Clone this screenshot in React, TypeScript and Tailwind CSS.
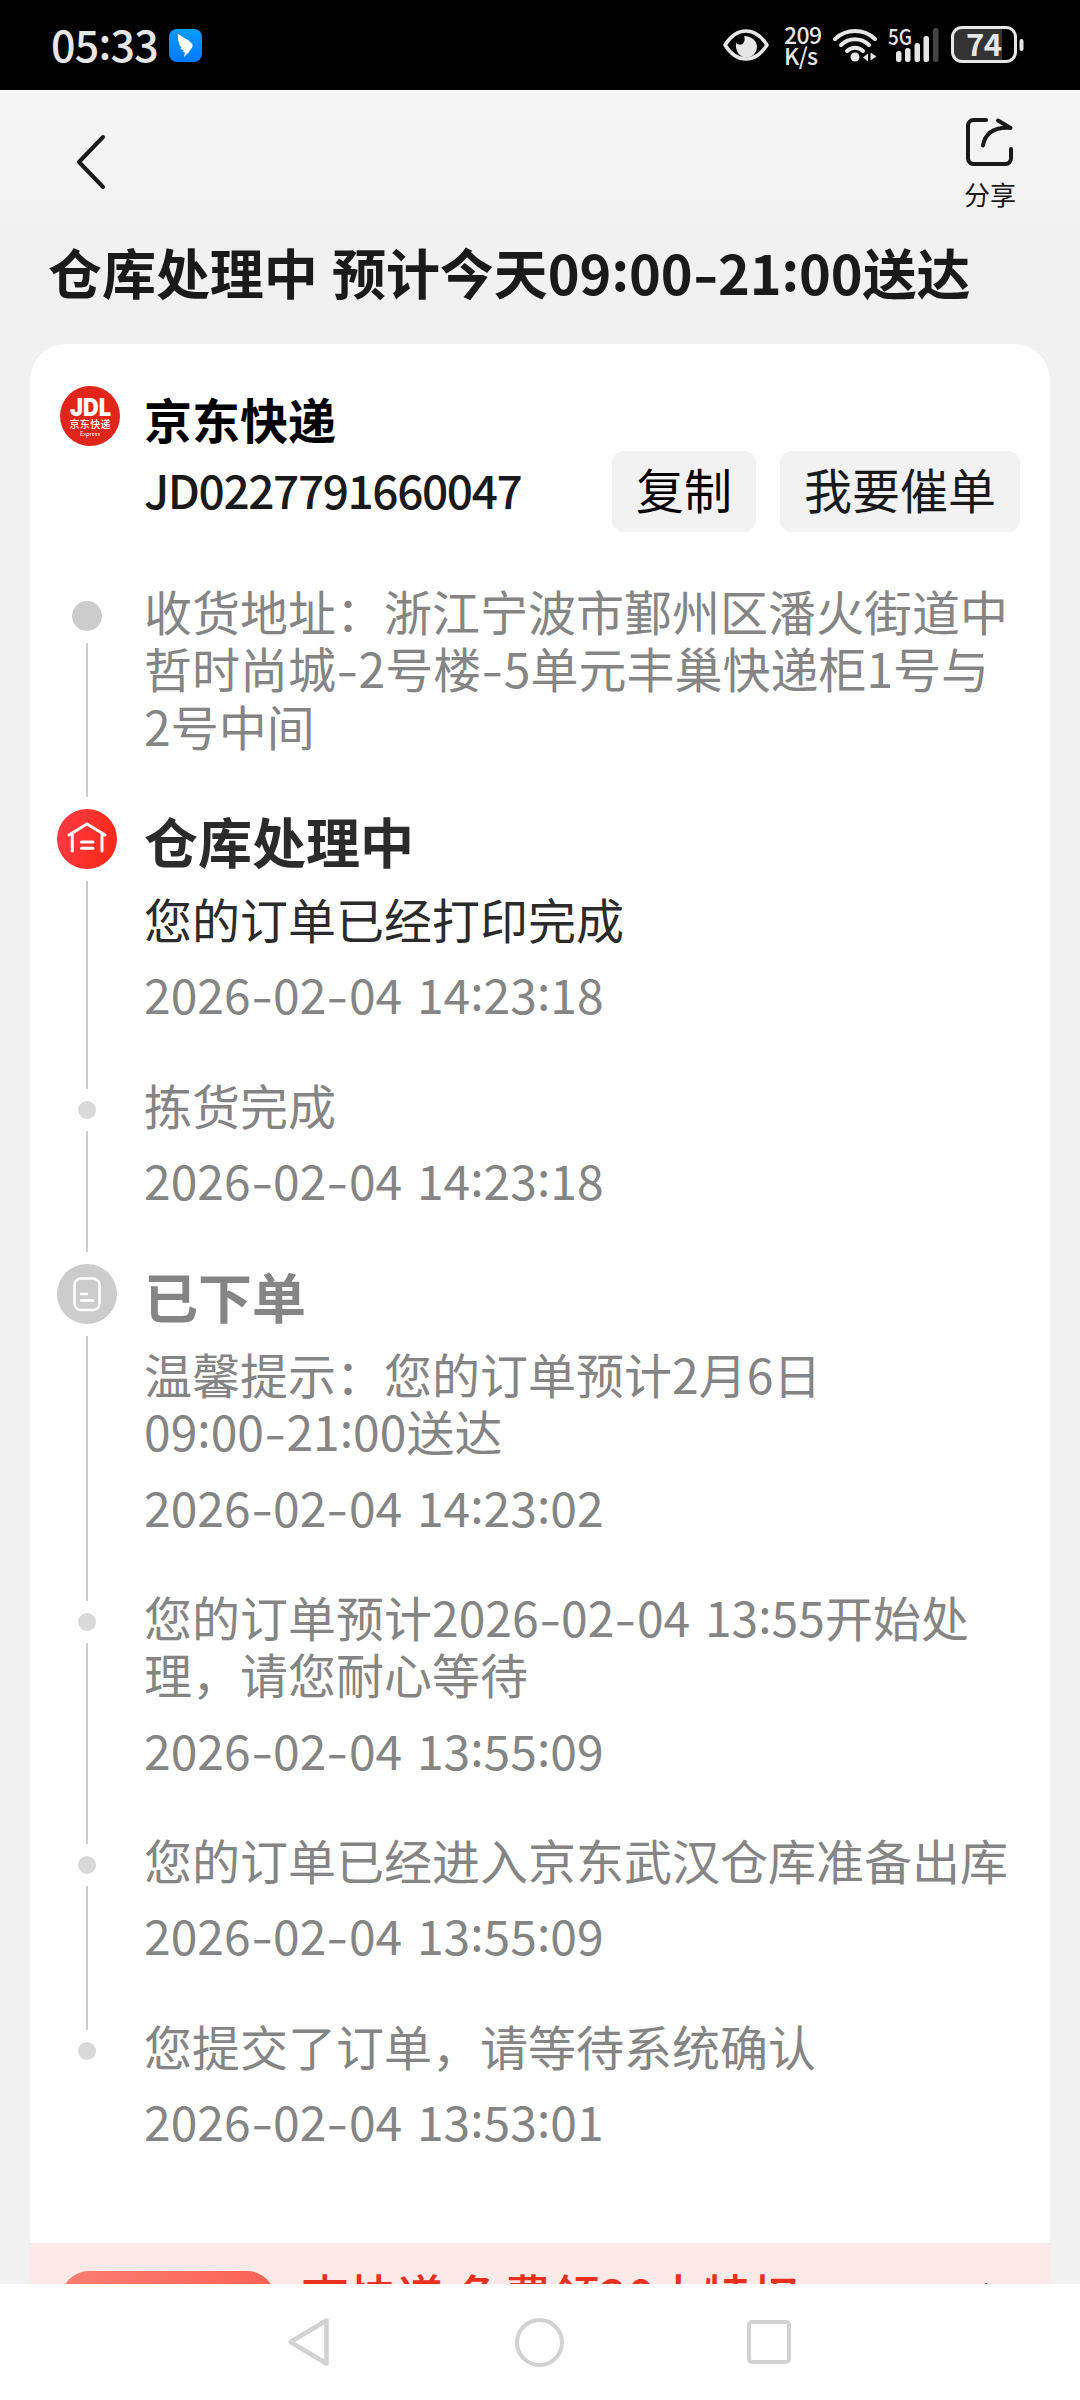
import React from 'react';
import { clsx } from 'clsx';

type Marker = 'dot' | 'bigDot' | 'warehouse' | 'order';

interface Step {
  marker: Marker;
  height: string;
  title?: string;
  lines: string[];
  time?: string;
  active?: boolean;
}

const steps: Step[] = [
  {
    marker: 'bigDot',
    height: 'h-[208px]',
    lines: ['收货地址：浙江宁波市鄞州区潘火街道中', '哲时尚城-2号楼-5单元丰巢快递柜1号与', '2号中间'],
  },
  {
    marker: 'warehouse',
    height: 'h-[292px]',
    title: '仓库处理中',
    lines: ['您的订单已经打印完成'],
    time: '2026-02-04 14:23:18',
    active: true,
  },
  { marker: 'dot', height: 'h-[163px]', lines: ['拣货完成'], time: '2026-02-04 14:23:18' },
  {
    marker: 'order',
    height: 'h-[349px]',
    title: '已下单',
    lines: ['温馨提示：您的订单预计2月6日', '09:00-21:00送达'],
    time: '2026-02-04 14:23:02',
  },
  {
    marker: 'dot',
    height: 'h-[243px]',
    lines: ['您的订单预计2026-02-04 13:55开始处', '理，请您耐心等待'],
    time: '2026-02-04 13:55:09',
  },
  { marker: 'dot', height: 'h-[186px]', lines: ['您的订单已经进入京东武汉仓库准备出库'], time: '2026-02-04 13:55:09' },
  { marker: 'dot', height: 'h-[201px]', lines: ['您提交了订单，请等待系统确认'], time: '2026-02-04 13:53:01' },
];

// Wider hyphens and vertically centred colons between digits
function Digits({ children }: { children: string }) {
  return (
    <>
      {children.split(/([-:])/).map((part, i) => {
        if (part === '-') return <span key={i} className="inline-block w-[0.47em] scale-x-[1.3] text-center">-</span>;
        if (part === ':') return <span key={i} className="relative -top-[0.08em]">:</span>;
        return part;
      })}
    </>
  );
}

function StatusBar() {
  return (
    <div className="flex h-[90px] shrink-0 items-center bg-black pl-[51px] pr-[56px] text-[#e6e6e6]">
      <span className="mb-[3px] w-[118px] text-[43px] font-medium leading-none tracking-[-0.8px]">
        <Digits>05:33</Digits>
      </span>
      <svg width="33" height="33" viewBox="0 0 33 33">
        <defs>
          <linearGradient id="ding" x1="0" y1="0" x2="0" y2="1">
            <stop offset="0" stopColor="#0a9dff" />
            <stop offset="1" stopColor="#0078ff" />
          </linearGradient>
        </defs>
        <rect width="33" height="33" rx="8" fill="url(#ding)" />
        <path d="M9 5c5 3.500 12 6 14.500 10.500.5 1.500-.5 3-1.500 4.500l-2 3-5 5 1-4.500-2.500-.5 1-1.500-3-2 1-1-2.500-3 .5-.5C9 12 8.500 8 9 5z" fill="#fff" />
      </svg>
      <div className="ml-auto flex items-center">
        <svg width="46" height="32" viewBox="0 0 46 32" fill="none">
          <path d="M2 16C8 6.500 15 2 23 2s15 4.500 21 14c-6 9.500-13 14-21 14S8 25.500 2 16z" stroke="#e6e6e6" strokeWidth="3.600" strokeLinejoin="round" />
          <path d="M21 7c2 4.500-1 9.500-4.500 8.500-2 0-3-1-3.500-2-1 8 3 15 10.500 15A10.500 10.500 0 0 0 34 18C34 11.500 28 7 21 7z" fill="#e6e6e6" />
        </svg>
        <div className="-mt-px ml-[15px] flex w-[36px] flex-col text-[23px] font-medium leading-[21px] tracking-[-0.6px]">
          <span>209</span>
          <span>K/s</span>
        </div>
        <svg className="ml-[13px]" width="44" height="34" viewBox="0 0 44 34" fill="none" stroke="#e6e6e6" strokeWidth="4" strokeLinecap="round">
          <path d="M2 11a29 29 0 0 1 40 0" />
          <path d="M8 17a20 20 0 0 1 28 0" />
          <path d="M14 23a11.500 11.500 0 0 1 16 0" />
          <circle cx="22" cy="29" r="4.500" fill="#e6e6e6" stroke="none" />
          <path d="M30 29.500l5-4v8zM37.500 24.500l6 4-6 4z" fill="#e6e6e6" stroke="none" />
        </svg>
        <svg className="ml-[11px]" width="52" height="36" viewBox="0 0 52 36">
          <text x="0" y="17.500" fontSize="22" fontWeight="500" fill="#e6e6e6" textLength="24" lengthAdjust="spacingAndGlyphs">5G</text>
          <rect x="8" y="24" width="5.500" height="11" rx="2.500" fill="#e6e6e6" />
          <rect x="17" y="21" width="5.500" height="14" rx="2.500" fill="#e6e6e6" />
          <rect x="26.500" y="16" width="5.500" height="19" rx="2.500" fill="#e6e6e6" />
          <rect x="35.500" y="9" width="5.500" height="26" rx="2.500" fill="#e6e6e6" />
          <rect x="45" y="1" width="5.500" height="34" rx="2.500" fill="#444" />
        </svg>
        <svg className="ml-[10px]" width="74" height="38" viewBox="0 0 74 38">
          <path d="M12 2.500h40v33H12a9 9 0 0 1-9-9v-15a9 9 0 0 1 9-9z" fill="#333" />
          <rect x="2.500" y="1.500" width="63" height="34" rx="9.500" fill="none" stroke="#e6e6e6" strokeWidth="3" />
          <rect x="69.500" y="13" width="4" height="12" rx="2" fill="#e6e6e6" />
          <text x="16" y="30" fontSize="31" fontWeight="600" fill="#e6e6e6" textLength="36">74</text>
        </svg>
      </div>
    </div>
  );
}

function Header() {
  return (
    <div className="flex h-[140px] items-start justify-between pl-[76px] pr-[62px]">
      <svg className="mt-[44px]" width="30" height="56" viewBox="0 0 30 56" fill="none">
        <path d="M27 3L3 28l24 25" stroke="#1a1a1a" strokeWidth="4" strokeLinecap="round" strokeLinejoin="round" />
      </svg>
      <div className="mt-[27px] flex w-[56px] flex-col items-center">
        <svg width="50" height="50" viewBox="0 0 50 50" fill="none" stroke="#1a1a1a" strokeWidth="4" strokeLinecap="round" strokeLinejoin="round">
          <path d="M21 3H8.500a5.500 5.500 0 0 0-5.500 5.500v33A5.500 5.500 0 0 0 8.500 47h32a5.500 5.500 0 0 0 5.500-5.500V32" />
          <path d="M33 3.500L45.500 11C31 10 20.500 15 18 28.500" />
        </svg>
        <span className="mt-[9px] whitespace-nowrap text-[26px] leading-[36px] text-[#1a1a1a]">分享</span>
      </div>
    </div>
  );
}

function CourierLogo() {
  return (
    <svg width="60" height="60" viewBox="0 0 60 60" fill="#fff">
      <circle cx="30" cy="30" r="30" fill="#e1251b" />
      <text x="10" y="30" fontSize="24" fontWeight="900" fontFamily="Inter, sans-serif" textLength="41" lengthAdjust="spacingAndGlyphs">JDL</text>
      <text x="9.500" y="41.500" fontSize="10" fontWeight="500" textLength="41">京东快递</text>
      <text x="20" y="49.500" fontSize="5.500" textLength="20">Express</text>
    </svg>
  );
}

function StepMarker({ marker }: { marker: Marker }) {
  switch (marker) {
    case 'bigDot': return <div className="size-[30px] rounded-full bg-[#ccc]" />;
    case 'warehouse': return (
      <svg width="60" height="60" viewBox="0 0 60 60" fill="none" stroke="#fff" strokeWidth="3" strokeLinecap="round" strokeLinejoin="round">
        <defs>
          <linearGradient id="warehouse" x1="0" y1="0" x2="1" y2=".3">
            <stop offset="0" stopColor="#ff3b47" />
            <stop offset="1" stopColor="#fb2b1c" />
          </linearGradient>
        </defs>
        <circle cx="30" cy="30" r="30" fill="url(#warehouse)" stroke="none" />
        <path d="M12 26L30 15l18 11M15.300 25v17M45 25v17M24.500 33h11.500M24.500 39.300h11.500" />
      </svg>
    );
    case 'order': return (
      <svg width="60" height="60" viewBox="0 0 60 60" fill="none" stroke="#fff" strokeWidth="2.500" strokeLinecap="round">
        <circle cx="30" cy="30" r="30" fill="#ccc" stroke="none" />
        <rect x="17.500" y="14.500" width="25" height="31.500" rx="6.500" />
        <path d="M24 30h6M24 36.500h12" />
      </svg>
    );
    default: return <div className="size-[18px] rounded-full bg-[#d9d9d9]" />;
  }
}

function TimelineStep({ step, last }: { step: Step; last: boolean }) {
  return (
    <div className={clsx('flex', step.height)}>
      <div className="flex w-[60px] flex-col items-center">
        <StepMarker marker={step.marker} />
        {!last && <div className="my-3 w-[2px] flex-1 bg-[#ccc]" />}
      </div>
      <div
        className={clsx(
          'ml-[27px] flex-1 whitespace-nowrap text-[48px] leading-[57.3px] [word-spacing:4px]',
          step.marker === 'dot' && '-mt-[25px]',
          step.marker === 'bigDot' && '-mt-[19px]',
          step.title && '-mt-px',
          step.active ? 'text-[#2b2b2b]' : 'text-[#858585]',
        )}
      >
        {step.title && <h2 className="mb-[16px] text-[54px] font-bold leading-[66px]">{step.title}</h2>}
        {step.lines.map((line) => (
          <p key={line}><Digits>{line}</Digits></p>
        ))}
        {step.time && <p className="mt-[18px] text-[#858585]"><Digits>{step.time}</Digits></p>}
      </div>
    </div>
  );
}

function Promo() {
  return (
    <div className="flex h-[120px] items-start bg-[#fee9e9] pl-[31px] pr-[46px] pt-[27px]">
      <div className="mt-px h-[66px] w-[214px] rounded-[28px] bg-linear-to-r from-[#f97d72] to-[#fc6155]" />
      <span className="-mt-[4px] ml-[26px] whitespace-nowrap text-[48px] font-medium leading-[57px] text-[#e8301f]">查快递 免费领20大特权</span>
      <svg className="ml-auto mt-[12px]" width="20" height="36" viewBox="0 0 20 36" fill="none">
        <path d="M2 3l16 15L2 33" stroke="#d8392c" strokeWidth="4" strokeLinecap="round" />
      </svg>
    </div>
  );
}

function NavBar() {
  return (
    <div className="flex h-[116px] shrink-0 items-center justify-between bg-[#fefefe] pl-[286px] pr-[289px]">
      <svg width="46" height="52" viewBox="0 0 46 52" fill="none">
        <path d="M40.500 4.500v43L4.500 26z" stroke="#d2d2d2" strokeWidth="4.500" strokeLinejoin="round" />
      </svg>
      <div className="size-[49px] rounded-full border-[4px] border-[#d2d2d2]" />
      <div className="size-[44px] rounded-[5px] border-[4px] border-[#d2d2d2]" />
    </div>
  );
}

export default function App() {
  return (
    <div className="flex h-[2400px] w-[1080px] flex-col overflow-hidden bg-[#f1f1f1] font-['Noto_Sans_CJK_SC',sans-serif]">
      <StatusBar />
      <main className="min-h-0 flex-1 overflow-hidden bg-linear-to-b from-[#f6f6f6] to-[#f1f1f1] to-[140px]">
        <Header />
        <h1 className="h-[114px] whitespace-nowrap pl-[48px] pt-[6px] text-[54px] font-bold leading-[72px] tracking-[-0.05px] text-[#1a1a1a] [word-spacing:2px]">
          <Digits>仓库处理中 预计今天09:00-21:00送达</Digits>
        </h1>
        <section className="mx-[30px] rounded-t-[36px] bg-white">
          <div className="flex h-[257px] pl-[30px] pr-[30px] pt-[42px]">
            <CourierLogo />
            <div className="ml-[24px] flex-1">
              <div className="-mt-[2px] mb-[2px] text-[48px] font-bold leading-[68px] text-black">京东快递</div>
              <div className="flex">
                <span className="mt-[7px] text-[46px] font-medium leading-[56px] tracking-[-1.4px] text-[#1a1a1a]">JD0227791660047</span>
                <div className="-mt-[3px] ml-auto flex gap-[24px] text-[48px]">
                  <button className="h-[81px] w-[144px] rounded-[12px] bg-[#f2f2f2] pb-[8px] leading-[72px] text-black">复制</button>
                  <button className="h-[81px] w-[240px] rounded-[12px] bg-[#f2f2f2] pb-[8px] leading-[72px] text-[#1a1a1a]">我要催单</button>
                </div>
              </div>
            </div>
          </div>
          <div className="pl-[27px]">
            {steps.map((step, i) => (
              <TimelineStep key={i} step={step} last={i === steps.length - 1} />
            ))}
          </div>
          <Promo />
        </section>
      </main>
      <NavBar />
    </div>
  );
}
